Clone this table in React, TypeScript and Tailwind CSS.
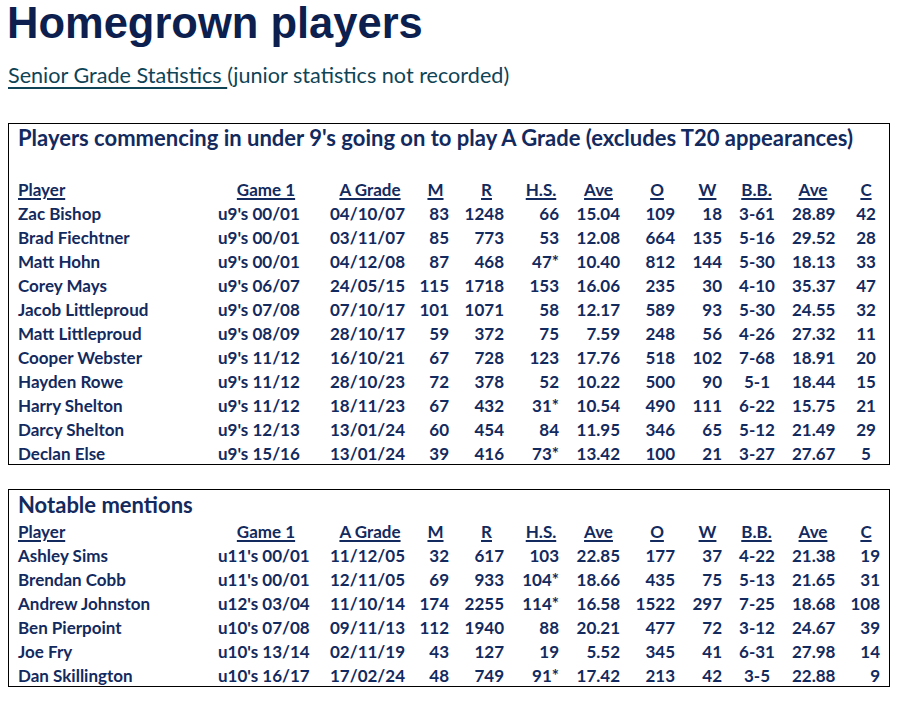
type Row = string[];

const MAIN: Row[] = [
  ["Zac Bishop", "u9's 00/01", "04/10/07", "83", "1248", "66", "15.04", "109", "18", "3-61", "28.89", "42"],
  ["Brad Fiechtner", "u9's 00/01", "03/11/07", "85", "773", "53", "12.08", "664", "135", "5-16", "29.52", "28"],
  ["Matt Hohn", "u9's 00/01", "04/12/08", "87", "468", "47*", "10.40", "812", "144", "5-30", "18.13", "33"],
  ["Corey Mays", "u9's 06/07", "24/05/15", "115", "1718", "153", "16.06", "235", "30", "4-10", "35.37", "47"],
  ["Jacob Littleproud", "u9's 07/08", "07/10/17", "101", "1071", "58", "12.17", "589", "93", "5-30", "24.55", "32"],
  ["Matt Littleproud", "u9's 08/09", "28/10/17", "59", "372", "75", "7.59", "248", "56", "4-26", "27.32", "11"],
  ["Cooper Webster", "u9's 11/12", "16/10/21", "67", "728", "123", "17.76", "518", "102", "7-68", "18.91", "20"],
  ["Hayden Rowe", "u9's 11/12", "28/10/23", "72", "378", "52", "10.22", "500", "90", "5-1", "18.44", "15"],
  ["Harry Shelton", "u9's 11/12", "18/11/23", "67", "432", "31*", "10.54", "490", "111", "6-22", "15.75", "21"],
  ["Darcy Shelton", "u9's 12/13", "13/01/24", "60", "454", "84", "11.95", "346", "65", "5-12", "21.49", "29"],
  ["Declan Else", "u9's 15/16", "13/01/24", "39", "416", "73*", "13.42", "100", "21", "3-27", "27.67", "5"],
];

const NOTABLE: Row[] = [
  ["Ashley Sims", "u11's 00/01", "11/12/05", "32", "617", "103", "22.85", "177", "37", "4-22", "21.38", "19"],
  ["Brendan Cobb", "u11's 00/01", "12/11/05", "69", "933", "104*", "18.66", "435", "75", "5-13", "21.65", "31"],
  ["Andrew Johnston", "u12's 03/04", "11/10/14", "174", "2255", "114*", "16.58", "1522", "297", "7-25", "18.68", "108"],
  ["Ben Pierpoint", "u10's 07/08", "09/11/13", "112", "1940", "88", "20.21", "477", "72", "3-12", "24.67", "39"],
  ["Joe Fry", "u10's 13/14", "02/11/19", "43", "127", "19", "5.52", "345", "41", "6-31", "27.98", "14"],
  ["Dan Skillington", "u10's 16/17", "17/02/24", "48", "749", "91*", "17.42", "213", "42", "3-5", "22.88", "9"],
];

// header cells are centred over their column, data cells line up like the spreadsheet
const HEADS = [
  { label: "Player", cls: "w-[208px] text-left" },
  { label: "Game 1", cls: "w-[80px] text-center" },
  { label: "A Grade", cls: "w-[80px] ml-[24px] text-center" },
  { label: "M", cls: "w-[40px] ml-[5.5px] text-center" },
  { label: "R", cls: "w-[40px] ml-[11px] text-center" },
  { label: "H.S.", cls: "w-[50px] ml-[9.5px] text-center" },
  { label: "Ave", cls: "w-[50px] ml-[7.5px] text-center" },
  { label: "O", cls: "w-[40px] ml-[13.5px] text-center" },
  { label: "W", cls: "w-[40px] ml-[10.5px] text-center" },
  { label: "B.B.", cls: "w-[50px] ml-[4px] text-center" },
  { label: "Ave", cls: "w-[50px] ml-[6.5px] text-center" },
  { label: "C", cls: "w-[30px] ml-[13px] text-center" },
];

const CELLS = [
  "w-[200px] text-left",
  "w-[100px] text-left",
  "w-[87px] text-right",
  "w-[44px] text-right",
  "w-[55px] text-right",
  "w-[55px] text-right",
  "w-[61px] text-right",
  "w-[55px] text-right",
  "w-[47px] text-right",
  "w-[70px] text-center",
  "w-[42px] text-right",
];

function StatTable({ rows, centreCatches }: { rows: Row[]; centreCatches: boolean }) {
  return (
    <div>
      <div className="flex h-6 pt-[3px] leading-[21px]">
        {HEADS.map((h, i) => (
          <div key={i} className={`shrink-0 whitespace-nowrap ${h.cls}`}>
            <span className="underline underline-offset-[2px] decoration-[1.5px]">{h.label}</span>
          </div>
        ))}
      </div>
      {rows.map((r) => (
        <div key={r[0]} className="flex h-6 pt-[3px] leading-[21px]">
          {r.slice(0, 11).map((v, i) => (
            <div key={i} className={`shrink-0 whitespace-nowrap ${CELLS[i]}`}>
              {v}
            </div>
          ))}
          <div
            className={`w-[46px] shrink-0 whitespace-nowrap ${
              centreCatches ? "pl-[18px] text-center" : "text-right"
            }`}
          >
            {r[11]}
          </div>
        </div>
      ))}
    </div>
  );
}

export default function App() {
  return (
    <div className="min-h-[702px] w-[908px] bg-white px-2 text-[#132a5e]">
      <h1 className="-ml-[1px] mt-[2px] font-['Liberation_Sans',Arial,sans-serif] text-[43.5px] font-bold leading-[43px] text-[#0c1f4f]">
        Homegrown players
      </h1>
      <p className="mt-[16px] font-[Lato,sans-serif] text-[21.6px] leading-[28px] text-[#0f4457]">
        <span className="underline underline-offset-[4px]">Senior Grade Statistics </span>
        (junior statistics not recorded)
      </p>

      <div className="mt-[34px] w-[882px] border border-black pl-[9px] font-[Lato,sans-serif] text-[17px] font-bold">
        <div className="mb-[24px] text-[22px] leading-[28px]">
          Players commencing in under 9's going on to play A Grade (excludes T20 appearances)
        </div>
        <StatTable rows={MAIN} centreCatches />
      </div>

      <div className="mt-[24px] w-[882px] border border-black pl-[9px] font-[Lato,sans-serif] text-[17px] font-bold">
        <div className="pt-[1px] text-[22px] leading-[27px]">Notable mentions</div>
        <StatTable rows={NOTABLE} centreCatches={false} />
      </div>
    </div>
  );
}
